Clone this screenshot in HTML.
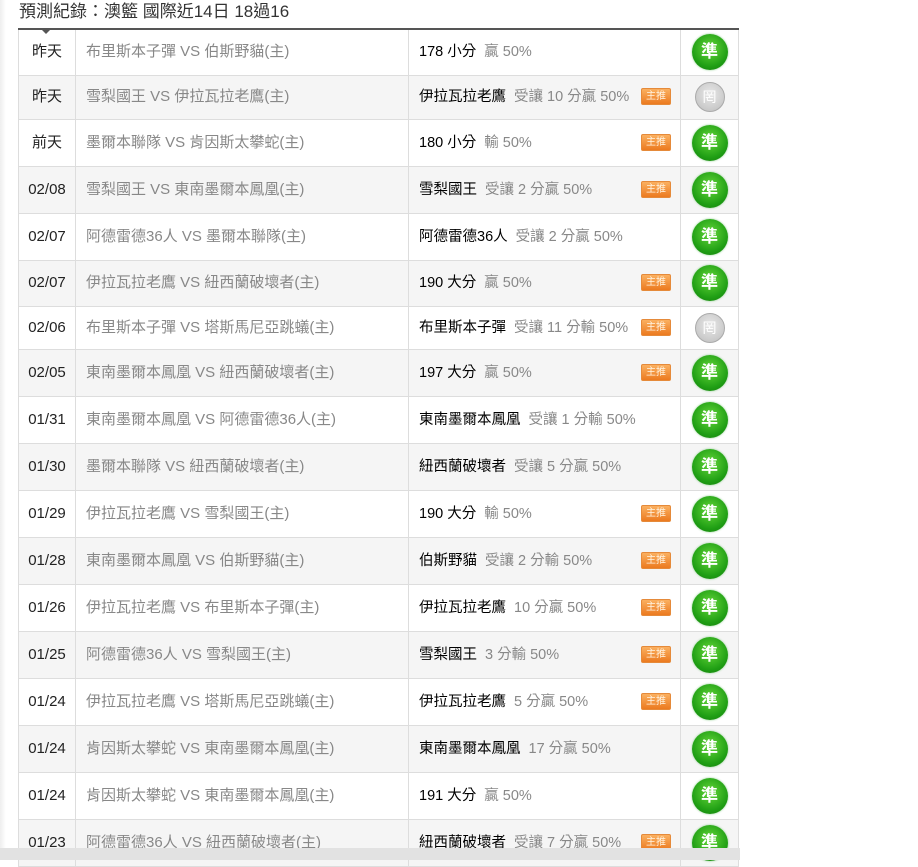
<!DOCTYPE html>
<html><head><meta charset="utf-8">
<style>
*{margin:0;padding:0;box-sizing:border-box}
body{width:918px;height:860px;background:#fff;font-family:"Liberation Sans","Noto Sans CJK TC",sans-serif;position:relative;overflow:hidden}
.shadow{position:absolute;left:0;top:0;width:6px;height:848px;background:linear-gradient(to right,#eee,#fff)}
h1{position:absolute;left:19px;top:-3px;font-size:17px;font-weight:normal;color:#333;white-space:nowrap}
.tri{position:absolute;left:41px;top:29px;width:0;height:0;border-left:5px solid transparent;border-right:5px solid transparent;border-top:5px solid #555}
table{position:absolute;left:18px;top:28px;border-collapse:collapse;border-top:2px solid #555;width:720px;table-layout:fixed}
td{border:1px solid #ddd;font-size:14px;line-height:20px;vertical-align:middle;white-space:nowrap;overflow:hidden}
tr:nth-child(even) td{background:#f5f5f5}
td.d{width:57px;text-align:center;color:#222;font-size:15px}
td.m{width:333px;padding-left:10px;color:#888;font-size:15px}
td.p{width:272px;padding-left:10px;color:#000;position:relative;font-size:14.5px}
td.p i{font-style:normal;color:#888;margin-left:8px}
td.b{width:58px;text-align:center}
.tag{position:absolute;left:232px;top:50%;margin-top:-9px;width:30px;height:17px;background:linear-gradient(#fbb060,#ec7a20);border:1px solid #e58a3a;color:#fff3e0;font-size:10px;line-height:15px;text-align:center;border-radius:2px}
.g{display:inline-block;width:36px;height:36px;border-radius:50%;background:radial-gradient(circle at 50% 40%,#66d83a,#1f9e14 65%,#15780c);box-shadow:0 0 2px #8c8;color:#fff;font-size:17px;font-weight:bold;line-height:36px;text-align:center;vertical-align:middle}
.n{display:inline-block;width:30px;height:30px;border-radius:50%;background:radial-gradient(circle at 50% 40%,#e8e8e8,#bdbdbd);border:1px solid #aaa;color:#fff;font-size:14px;line-height:28px;text-align:center;vertical-align:middle}
.bar{position:absolute;left:0;top:848px;width:740px;height:12px;background:#e2e2e2}
</style></head><body>
<div class="shadow"></div>
<h1>預測紀錄：澳籃 國際近14日 18過16</h1>
<table>
<tr style="height:46px"><td class="d">昨天</td><td class="m">布里斯本子彈 VS 伯斯野貓(主)</td><td class="p">178 小分<i>贏 50%</i></td><td class="b"><span class="g">準</span></td></tr>
<tr style="height:44px"><td class="d">昨天</td><td class="m">雪梨國王 VS 伊拉瓦拉老鷹(主)</td><td class="p">伊拉瓦拉老鷹<i>受讓 10 分贏 50%</i><span class="tag">主推</span></td><td class="b"><span class="n">罔</span></td></tr>
<tr style="height:47px"><td class="d">前天</td><td class="m">墨爾本聯隊 VS 肯因斯太攀蛇(主)</td><td class="p">180 小分<i>輸 50%</i><span class="tag">主推</span></td><td class="b"><span class="g">準</span></td></tr>
<tr style="height:47px"><td class="d">02/08</td><td class="m">雪梨國王 VS 東南墨爾本鳳凰(主)</td><td class="p">雪梨國王<i>受讓 2 分贏 50%</i><span class="tag">主推</span></td><td class="b"><span class="g">準</span></td></tr>
<tr style="height:47px"><td class="d">02/07</td><td class="m">阿德雷德36人 VS 墨爾本聯隊(主)</td><td class="p">阿德雷德36人<i>受讓 2 分贏 50%</i></td><td class="b"><span class="g">準</span></td></tr>
<tr style="height:46px"><td class="d">02/07</td><td class="m">伊拉瓦拉老鷹 VS 紐西蘭破壞者(主)</td><td class="p">190 大分<i>贏 50%</i><span class="tag">主推</span></td><td class="b"><span class="g">準</span></td></tr>
<tr style="height:43px"><td class="d">02/06</td><td class="m">布里斯本子彈 VS 塔斯馬尼亞跳蟻(主)</td><td class="p">布里斯本子彈<i>受讓 11 分輸 50%</i><span class="tag">主推</span></td><td class="b"><span class="n">罔</span></td></tr>
<tr style="height:47px"><td class="d">02/05</td><td class="m">東南墨爾本鳳凰 VS 紐西蘭破壞者(主)</td><td class="p">197 大分<i>贏 50%</i><span class="tag">主推</span></td><td class="b"><span class="g">準</span></td></tr>
<tr style="height:47px"><td class="d">01/31</td><td class="m">東南墨爾本鳳凰 VS 阿德雷德36人(主)</td><td class="p">東南墨爾本鳳凰<i>受讓 1 分輸 50%</i></td><td class="b"><span class="g">準</span></td></tr>
<tr style="height:47px"><td class="d">01/30</td><td class="m">墨爾本聯隊 VS 紐西蘭破壞者(主)</td><td class="p">紐西蘭破壞者<i>受讓 5 分贏 50%</i></td><td class="b"><span class="g">準</span></td></tr>
<tr style="height:47px"><td class="d">01/29</td><td class="m">伊拉瓦拉老鷹 VS 雪梨國王(主)</td><td class="p">190 大分<i>輸 50%</i><span class="tag">主推</span></td><td class="b"><span class="g">準</span></td></tr>
<tr style="height:47px"><td class="d">01/28</td><td class="m">東南墨爾本鳳凰 VS 伯斯野貓(主)</td><td class="p">伯斯野貓<i>受讓 2 分輸 50%</i><span class="tag">主推</span></td><td class="b"><span class="g">準</span></td></tr>
<tr style="height:47px"><td class="d">01/26</td><td class="m">伊拉瓦拉老鷹 VS 布里斯本子彈(主)</td><td class="p">伊拉瓦拉老鷹<i>10 分贏 50%</i><span class="tag">主推</span></td><td class="b"><span class="g">準</span></td></tr>
<tr style="height:47px"><td class="d">01/25</td><td class="m">阿德雷德36人 VS 雪梨國王(主)</td><td class="p">雪梨國王<i>3 分輸 50%</i><span class="tag">主推</span></td><td class="b"><span class="g">準</span></td></tr>
<tr style="height:47px"><td class="d">01/24</td><td class="m">伊拉瓦拉老鷹 VS 塔斯馬尼亞跳蟻(主)</td><td class="p">伊拉瓦拉老鷹<i>5 分贏 50%</i><span class="tag">主推</span></td><td class="b"><span class="g">準</span></td></tr>
<tr style="height:47px"><td class="d">01/24</td><td class="m">肯因斯太攀蛇 VS 東南墨爾本鳳凰(主)</td><td class="p">東南墨爾本鳳凰<i>17 分贏 50%</i></td><td class="b"><span class="g">準</span></td></tr>
<tr style="height:47px"><td class="d">01/24</td><td class="m">肯因斯太攀蛇 VS 東南墨爾本鳳凰(主)</td><td class="p">191 大分<i>贏 50%</i></td><td class="b"><span class="g">準</span></td></tr>
<tr style="height:47px"><td class="d">01/23</td><td class="m">阿德雷德36人 VS 紐西蘭破壞者(主)</td><td class="p">紐西蘭破壞者<i>受讓 7 分贏 50%</i><span class="tag">主推</span></td><td class="b"><span class="g">準</span></td></tr>
</table>
<div class="tri"></div>
<div class="bar"></div>
</body></html>
